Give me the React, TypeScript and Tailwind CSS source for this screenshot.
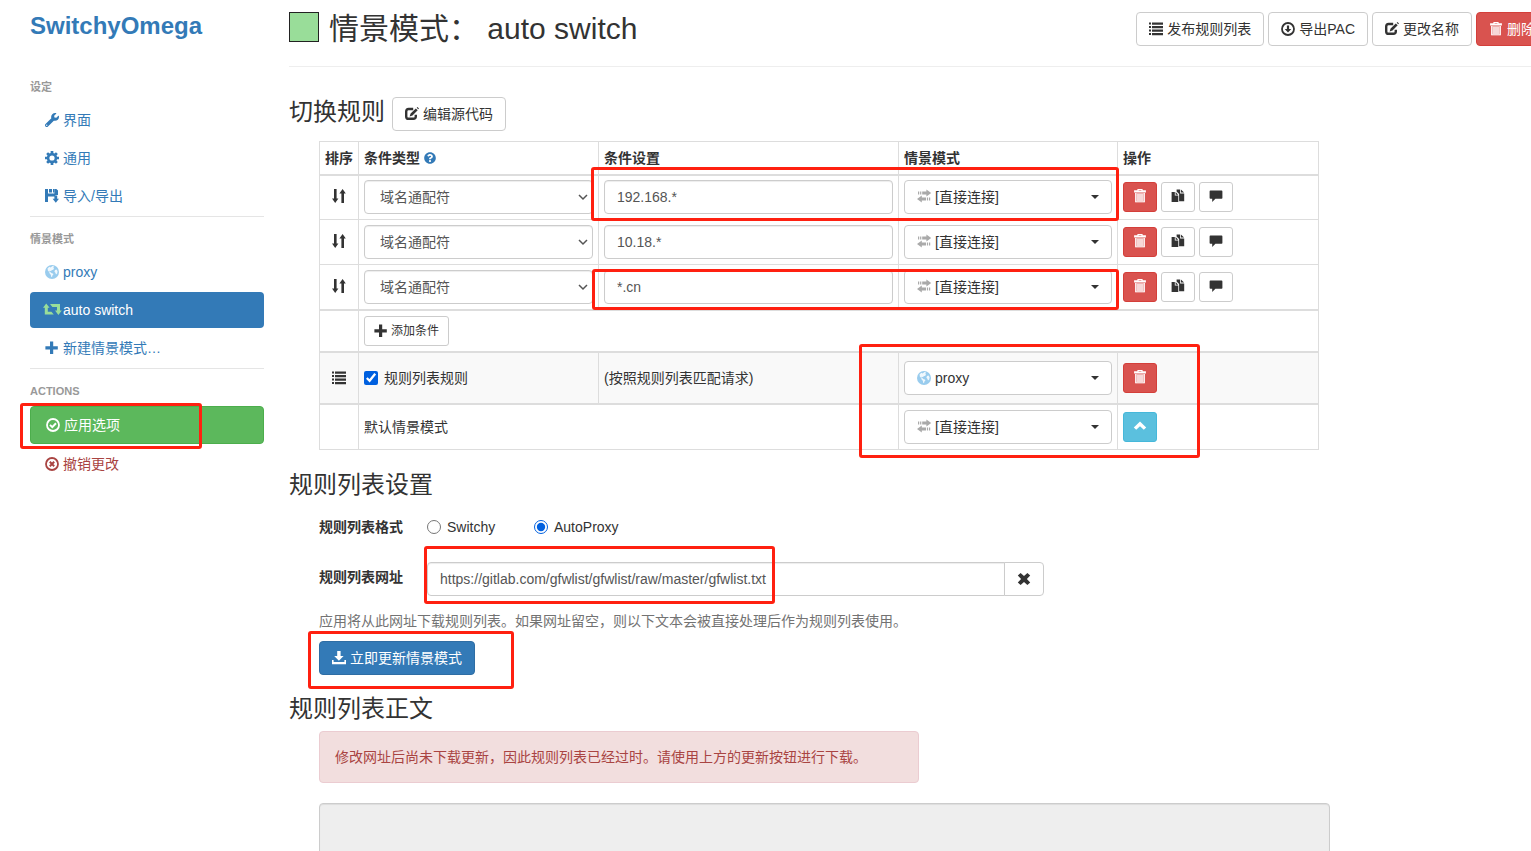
import type { ReactNode } from "react";
import { clsx } from "clsx";
import { FaQuestionCircle, FaWrench } from "react-icons/fa";

type IconProps = { className?: string; children?: ReactNode };

function Icon({ className, children }: IconProps) {
  return (
    <svg
      viewBox="0 0 14 14"
      aria-hidden="true"
      fill="currentColor"
      className={clsx("inline-block h-3.5 w-3.5 shrink-0 overflow-visible", className)}
    >
      {children}
    </svg>
  );
}

function CogIcon() {
  return (
    <Icon>
      <circle cx="7" cy="7" r="3.9" fill="none" stroke="currentColor" strokeWidth="2.6" />
      <g stroke="currentColor" strokeWidth="2.7">
        <path d="M7 0v2.5M7 11.5V14M0 7h2.5M11.5 7H14" />
        <path d="M2.1 2.1l1.7 1.7M10.2 10.2l1.7 1.7M2.1 11.9l1.7-1.7M10.2 3.8l1.7-1.7" />
      </g>
    </Icon>
  );
}

function FloppyIcon() {
  return (
    <Icon>
      <path d="M0 0h3v4.6h6.4V0h2L13 1.6V6h-2.6v1.4H3V13H0z" />
      <path d="M4 0h3v3.6H4zM8 0h1.4v3.6H8z" />
      <path d="M9.4 6.4h2.8v3.4H14L10.8 13.8 7.6 9.8h1.8z" />
    </Icon>
  );
}

function GlobeIcon() {
  return (
    <Icon className="text-[#99ccee]">
      <circle cx="7" cy="7" r="7" />
      <path d="M2.6 3.2L4.6 1.8l1 .6L7.4 1l1.8.6-1 1.4 1 .6-1 1.2-1.6.4-.6 1-1.2-.4-.6.8 1.4.6 1.2 1 1.2.2.4 1-1 1.2-.4 1.6-.8-.4-.4-2-1.2-1.4-.4-1.4-1.4-1.4z" fill="#fff" opacity="0.85" />
      <path d="M10 5l1.6-.6 1 1.8-.4 2.4-1.2 1-.6-1.8-1-1z" fill="#fff" opacity="0.85" />
    </Icon>
  );
}

function RetweetIcon() {
  return (
    <Icon className="text-[#99dd99]">
      <path d="M1.2.6L4.6 4.8H2.8v4h3.6l2.4 2.8H-.2V4.8H-2zM5 1h10v6.6h1.8L13.4 12 10 7.6h2V4H7.4z" />
    </Icon>
  );
}

function PlusIcon() {
  return (
    <Icon>
      <path d="M5 .6h3.2v4.6h4.6v3.2H8.2V13H5V8.4H.4V5.2H5z" />
    </Icon>
  );
}

function Ring({ children }: IconProps) {
  return (
    <Icon>
      <circle cx="7" cy="7" r="6" fill="none" stroke="currentColor" strokeWidth="1.8" />
      {children}
    </Icon>
  );
}

function OkCircleIcon() {
  return (
    <Ring>
      <path d="M4 6.9l2.3 2.2L10 5.3" fill="none" stroke="currentColor" strokeWidth="2" />
    </Ring>
  );
}

function RemoveCircleIcon() {
  return (
    <Ring>
      <path d="M4.8 4.8l4.4 4.4M9.2 4.8L4.8 9.2" stroke="currentColor" strokeWidth="2" />
    </Ring>
  );
}

function DownloadCircleIcon() {
  return (
    <Ring>
      <path d="M5.9 3.4h2.2v3.5h2.2L7 10.6 3.7 6.9h2.2z" />
    </Ring>
  );
}

function ListIcon({ className }: IconProps) {
  return (
    <Icon className={className}>
      <path d="M0 .5h2v2H0zM0 4h2v2H0zM0 7.5h2v2H0zM0 11h2v2H0zM3 .5h11v2.2H3zM3 4h11v2.2H3zM3 7.5h11v2.2H3zM3 11h11v2.2H3z" />
    </Icon>
  );
}

function EditIcon() {
  return (
    <Icon>
      <path d="M8.2 2H3.6Q1.2 2 1.2 4.4v5Q1.2 11.8 3.6 11.8h4.8q2.4 0 2.4-2.4V7.8" fill="none" stroke="currentColor" strokeWidth="2.4" />
      <path d="M10.8 1.4l1.9 1.9-5.2 5.2-2.9 1 1-2.9zM11.7.8l.8-.8L14 1.5l-.8.8z" />
    </Icon>
  );
}

function TrashIcon() {
  return (
    <Icon>
      <path d="M4.4 0h5.2v1.3h3.3v2.2H1.1V1.3h3.3zM5.6 1v.5h2.8V1z" fillRule="evenodd" />
      <path d="M2.2 4h9.6v9.2H2.2z" opacity="0.55" />
      <path d="M2.2 4h1v9.2h-1zM4.5 5h1v7h-1zM6.5 5h1v7h-1zM8.5 5h1v7h-1zM10.8 4h1v9.2h-1zM2.2 12.4h9.6v.8H2.2z" />
    </Icon>
  );
}

function SortIcon() {
  return (
    <Icon className="mb-1">
      <path d="M2 0h2.6v9.6h1.8L3.2 14 0 9.6h2zM9.4 14V4.4H7.4L10.6 0l3.2 4.4H12V14z" />
    </Icon>
  );
}

function CopyIcon() {
  return (
    <Icon>
      <path d="M.6 3h3.2v3.6h3.5V13H.6zM4.6 3l2.6 2.7H4.6z" />
      <path d="M5.6.4h3.5v4h4.1v7.8H8.1V5L5.6 2.6zM9.9.4l3.2 3.2H9.9z" />
    </Icon>
  );
}

function CommentIcon() {
  return (
    <Icon>
      <path d="M1.4 1.6h11.2q.8 0 .8.8V9q0 .8-.8.8H6.4L3.2 13V9.8H1.4q-.8 0-.8-.8V2.4q0-.8.8-.8z" />
    </Icon>
  );
}

function ChevronUpIcon() {
  return (
    <Icon>
      <path d="M7 2.6l6.2 5.8-2.4 2.3L7 7.3l-3.8 3.4L.8 8.4z" />
    </Icon>
  );
}

function RemoveIcon() {
  return (
    <Icon>
      <path d="M3.6.9L7 4.1 10.4.9l2.8 2.7L9.9 7l3.3 3.4-2.8 2.7L7 9.9l-3.4 3.2L.8 10.4 4.1 7 .8 3.6z" />
    </Icon>
  );
}

function DownloadIcon() {
  return (
    <Icon>
      <path d="M5.2 0h3.4v5h3L6.9 9.8 2.2 5h3z" />
      <path d="M0 9h1.6v2h10.8V9H14v4.2H0z" />
    </Icon>
  );
}

function TransferIcon() {
  return (
    <Icon className="text-[#aaaaaa]">
      <path d="M9.4-.4L14.2 3 9.4 6.4V4.6H5.2V1.4h4.2zM1 1.4h1.2v3.2H1zM3.1 1.4h1.2v3.2H3.1z" />
      <path d="M4.8 5.6L0 9l4.8 3.4v-1.8H9V7.4H4.8zM12 7.4h1.2v3.2H12zM9.9 7.4h1.2v3.2H9.9z" />
    </Icon>
  );
}

const buttonColors = {
  default: "border-[#cccccc] bg-white text-[#333333]",
  danger: "border-[#d43f3a] bg-[#d9534f] text-white",
  primary: "border-[#2e6da4] bg-[#337ab7] text-white",
  info: "border-[#46b8da] bg-[#5bc0de] text-white",
};

type ButtonProps = {
  color?: keyof typeof buttonColors;
  icon: ReactNode;
  label?: string;
  children?: ReactNode;
};

function Button({ color = "default", icon, children }: ButtonProps) {
  return (
    <button
      type="button"
      className={clsx("flex h-[34px] shrink-0 items-center gap-1 rounded-sm border px-3 whitespace-nowrap", buttonColors[color])}
    >
      {icon}
      {children}
    </button>
  );
}

function SmallButton({ color = "default", icon, label, children }: ButtonProps) {
  return (
    <button
      type="button"
      aria-label={label}
      className={clsx(
        "flex h-[30px] shrink-0 items-center gap-[3px] rounded-[3px] border px-[9px] text-xs",
        !children && "pb-0.5",
        buttonColors[color],
      )}
    >
      {icon}
      {children}
    </button>
  );
}

function ProfileSelect({ proxy = false }: { proxy?: boolean }) {
  return (
    <button
      type="button"
      aria-haspopup="listbox"
      className="flex h-[34px] w-full items-center gap-1 rounded-sm border border-[#cccccc] bg-white px-3 text-left"
    >
      {proxy ? <GlobeIcon /> : <TransferIcon />}
      <span className="flex-1">{proxy ? "proxy" : "[直接连接]"}</span>
      <svg viewBox="0 0 8 4" aria-hidden="true" className="h-1 w-2" fill="currentColor">
        <path d="M0 0h8L4 4z" />
      </svg>
    </button>
  );
}

// Red frame around a step of the walkthrough
function Mark({ className }: { className: string }) {
  return <span className={clsx("pointer-events-none absolute rounded-[3px] border-3 border-[#ff2010]", className)} />;
}

function NavHeader({ children }: IconProps) {
  return <h2 className="h-[37px] pt-3 text-[11px] leading-5 font-bold text-[#999999]">{children}</h2>;
}

function NavItem({ icon, className = "text-[#337ab7]", children }: IconProps & { icon: ReactNode }) {
  return (
    <a href="#" className={clsx("mb-0.5 flex h-9 items-center gap-1 rounded-sm px-[15px]", className)}>
      {icon}
      {children}
    </a>
  );
}

function Sidebar() {
  return (
    <aside className="w-[264px] shrink-0 pl-[30px]">
      <h1 className="pt-3 text-2xl leading-7 font-bold text-[#337ab7]">
        <a href="#">SwitchyOmega</a>
      </h1>
      <nav className="mt-[25px]">
        <NavHeader>设定</NavHeader>
        <NavItem icon={<FaWrench className="h-3.5 w-3.5" />}>界面</NavItem>
        <NavItem icon={<CogIcon />}>通用</NavItem>
        <NavItem icon={<FloppyIcon />}>导入/导出</NavItem>
        <hr className="mt-px border-[#e5e5e5]" />
        <NavHeader>情景模式</NavHeader>
        <NavItem icon={<GlobeIcon />}>proxy</NavItem>
        <NavItem icon={<RetweetIcon />} className="bg-[#337ab7] text-white">
          auto switch
        </NavItem>
        <NavItem icon={<PlusIcon />}>新建情景模式…</NavItem>
        <hr className="border-[#e5e5e5]" />
        <NavHeader>ACTIONS</NavHeader>
        <div className="relative mb-0.5">
          <button
            type="button"
            className="flex h-[38px] w-full items-center gap-1 rounded-sm border border-[#4cae4c] bg-[#5cb85c] px-[15px] text-white"
          >
            <OkCircleIcon />
            应用选项
          </button>
          <Mark className="-top-[3px] -left-2.5 h-[46px] w-[182px]" />
        </div>
        <NavItem icon={<RemoveCircleIcon />} className="text-[#a94442]">
          撤销更改
        </NavItem>
      </nav>
    </aside>
  );
}

const rules = ["192.168.*", "10.18.*", "*.cn"];

const cell = "border border-[#dddddd] px-[5px]";
const control = "h-[34px] rounded-sm border border-[#cccccc] bg-white text-[#555555] shadow-[inset_0_1px_1px_rgba(0,0,0,0.075)]";

function RuleRow({ pattern }: { pattern: string }) {
  return (
    <tr className="h-[45px]">
      <td className={clsx(cell, "text-center")}>
        <SortIcon />
      </td>
      <td className={cell}>
        <div className="relative">
          <select aria-label="条件类型" className={clsx(control, "block w-full appearance-none px-[15px]")}>
            <option>域名通配符</option>
          </select>
          <svg viewBox="0 0 8 5" aria-hidden="true" className="pointer-events-none absolute top-[15px] right-1.5 h-[5px] w-2 overflow-visible">
            <path d="M0 0l4 4 4-4" fill="none" stroke="#555" strokeWidth="1.5" />
          </svg>
        </div>
      </td>
      <td className={cell}>
        <input type="text" aria-label="条件设置" defaultValue={pattern} className={clsx(control, "block w-full px-3")} />
      </td>
      <td className={cell}>
        <ProfileSelect />
      </td>
      <td className={cell}>
        <div className="flex gap-1">
          <SmallButton color="danger" label="删除" icon={<TrashIcon />} />
          <SmallButton label="复制" icon={<CopyIcon />} />
          <SmallButton label="备注" icon={<CommentIcon />} />
        </div>
      </td>
    </tr>
  );
}

function RulesTable() {
  return (
    <div className="relative mt-2.5 ml-[30px] w-[1000px]">
      <table className="w-full table-fixed border-collapse">
        <colgroup>
          <col className="w-[39px]" />
          <col className="w-[240px]" />
          <col className="w-[300px]" />
          <col className="w-[219px]" />
          <col />
        </colgroup>
        <thead>
          <tr className="h-[33px] text-left">
            <th className={cell}>排序</th>
            <th className={cell}>
              条件类型 <FaQuestionCircle className="inline h-3 w-3 align-[-1px] text-[#337ab7]" />
            </th>
            <th className={cell}>条件设置</th>
            <th className={cell}>情景模式</th>
            <th className={cell}>操作</th>
          </tr>
        </thead>
        <tbody className="border-t-2 border-[#dddddd]">
          {rules.map((pattern) => (
            <RuleRow key={pattern} pattern={pattern} />
          ))}
        </tbody>
        <tbody className="border-t-2 border-[#dddddd]">
          <tr className="h-[42px]">
            <td className={cell} />
            <td className={cell} colSpan={4}>
              <SmallButton icon={<PlusIcon />}>添加条件</SmallButton>
            </td>
          </tr>
        </tbody>
        <tbody className="border-t-2 border-[#dddddd] bg-[#f9f9f9]">
          <tr className="h-[52px]">
            <td className={clsx(cell, "text-center")}>
              <ListIcon className="mb-0.5" />
            </td>
            <td className={cell}>
              <label className="flex items-center gap-1.5">
                <input type="checkbox" defaultChecked className="h-3.5 w-3.5 accent-[#0060df]" />
                规则列表规则
              </label>
            </td>
            <td className={cell}>(按照规则列表匹配请求)</td>
            <td className={cell}>
              <ProfileSelect proxy />
            </td>
            <td className={cell}>
              <SmallButton color="danger" label="删除" icon={<TrashIcon />} />
            </td>
          </tr>
        </tbody>
        <tbody className="border-t-2 border-[#dddddd]">
          <tr className="h-[46px]">
            <td className={cell} />
            <td className={cell} colSpan={2}>
              默认情景模式
            </td>
            <td className={cell}>
              <ProfileSelect />
            </td>
            <td className={cell}>
              <SmallButton color="info" label="上移" icon={<ChevronUpIcon />} />
            </td>
          </tr>
        </tbody>
      </table>
      <Mark className="top-[26px] left-[272px] h-[54px] w-[528px]" />
      <Mark className="top-32 left-[273px] h-[41px] w-[527px]" />
      <Mark className="top-[203px] left-[540px] h-[114px] w-[341px]" />
    </div>
  );
}

function RuleListSettings() {
  return (
    <section className="mt-5">
      <h3 className="pt-px text-2xl leading-7">规则列表设置</h3>
      <div className="ml-[30px]">
        <fieldset className="mt-[18px] flex items-center">
          <legend className="float-left w-[108px] font-bold">规则列表格式</legend>
          <label className="flex w-[107px] items-center gap-1.5">
            <input type="radio" name="format" className="h-3.5 w-3.5 accent-[#0060df]" />
            Switchy
          </label>
          <label className="flex items-center gap-1.5">
            <input type="radio" name="format" defaultChecked className="h-3.5 w-3.5 accent-[#0060df]" />
            AutoProxy
          </label>
        </fieldset>
        <div className="mt-[25px] flex">
          <label htmlFor="list-url" className="w-[108px] pt-[5px] font-bold">
            规则列表网址
          </label>
          <div className="relative flex w-[617px]">
            <input
              id="list-url"
              type="text"
              defaultValue="https://gitlab.com/gfwlist/gfwlist/raw/master/gfwlist.txt"
              className={clsx(control, "min-w-0 flex-1 rounded-r-none px-3")}
            />
            <button
              type="button"
              aria-label="清除"
              className="-ml-px flex h-[34px] w-10 items-center justify-center rounded-r-sm border border-[#cccccc] bg-white"
            >
              <RemoveIcon />
            </button>
            <Mark className="-top-4 -left-[3px] h-[58px] w-[351px]" />
          </div>
        </div>
        <p className="mt-[15px] text-[#737373]">应用将从此网址下载规则列表。如果网址留空，则以下文本会被直接处理后作为规则列表使用。</p>
        <div className="relative mt-2.5 w-fit">
          <Button color="primary" icon={<DownloadIcon />}>
            立即更新情景模式
          </Button>
          <Mark className="-top-2.5 -left-[11px] h-[58px] w-[206px]" />
        </div>
      </div>
    </section>
  );
}

export default function App() {
  return (
    <div className="flex h-screen overflow-hidden bg-white font-['Liberation_Sans','Noto_Sans_CJK_SC',sans-serif] text-sm leading-5 text-[#333333]">
      <Sidebar />
      <main className="ml-[25px] min-w-0 flex-1">
        <header className="-mr-[17px] flex h-[67px] items-start border-b border-[#eeeeee] pt-3">
          <span className="h-[30px] w-[30px] border border-[#222222] bg-[#99dd99]" />
          <h2 className="ml-2.5 flex-1 pt-px text-3xl leading-8 whitespace-nowrap">情景模式： auto switch</h2>
          <div className="flex gap-1">
            <Button icon={<ListIcon />}>发布规则列表</Button>
            <Button icon={<DownloadCircleIcon />}>导出PAC</Button>
            <Button icon={<EditIcon />}>更改名称</Button>
            <Button color="danger" icon={<TrashIcon />}>
              删除
            </Button>
          </div>
        </header>

        <section className="mt-[30px]">
          <div className="flex gap-[7px]">
            <h3 className="pt-px text-2xl leading-7">切换规则</h3>
            <Button icon={<EditIcon />}>编辑源代码</Button>
          </div>
          <RulesTable />
        </section>

        <RuleListSettings />

        <section className="mt-5">
          <h3 className="text-2xl leading-7">规则列表正文</h3>
          <div className="ml-[30px]">
            <p role="alert" className="mt-2 w-[600px] rounded-sm border border-[#ebccd1] bg-[#f2dede] p-[15px] text-[#a94442]">
              修改网址后尚未下载更新，因此规则列表已经过时。请使用上方的更新按钮进行下载。
            </p>
            <textarea
              aria-label="规则列表正文"
              readOnly
              rows={20}
              className="mt-5 block w-[1011px] resize-none rounded-sm border border-[#cccccc] bg-[#eeeeee] px-3 py-1.5 shadow-[inset_0_1px_1px_rgba(0,0,0,0.075)]"
            />
          </div>
        </section>
      </main>
    </div>
  );
}
